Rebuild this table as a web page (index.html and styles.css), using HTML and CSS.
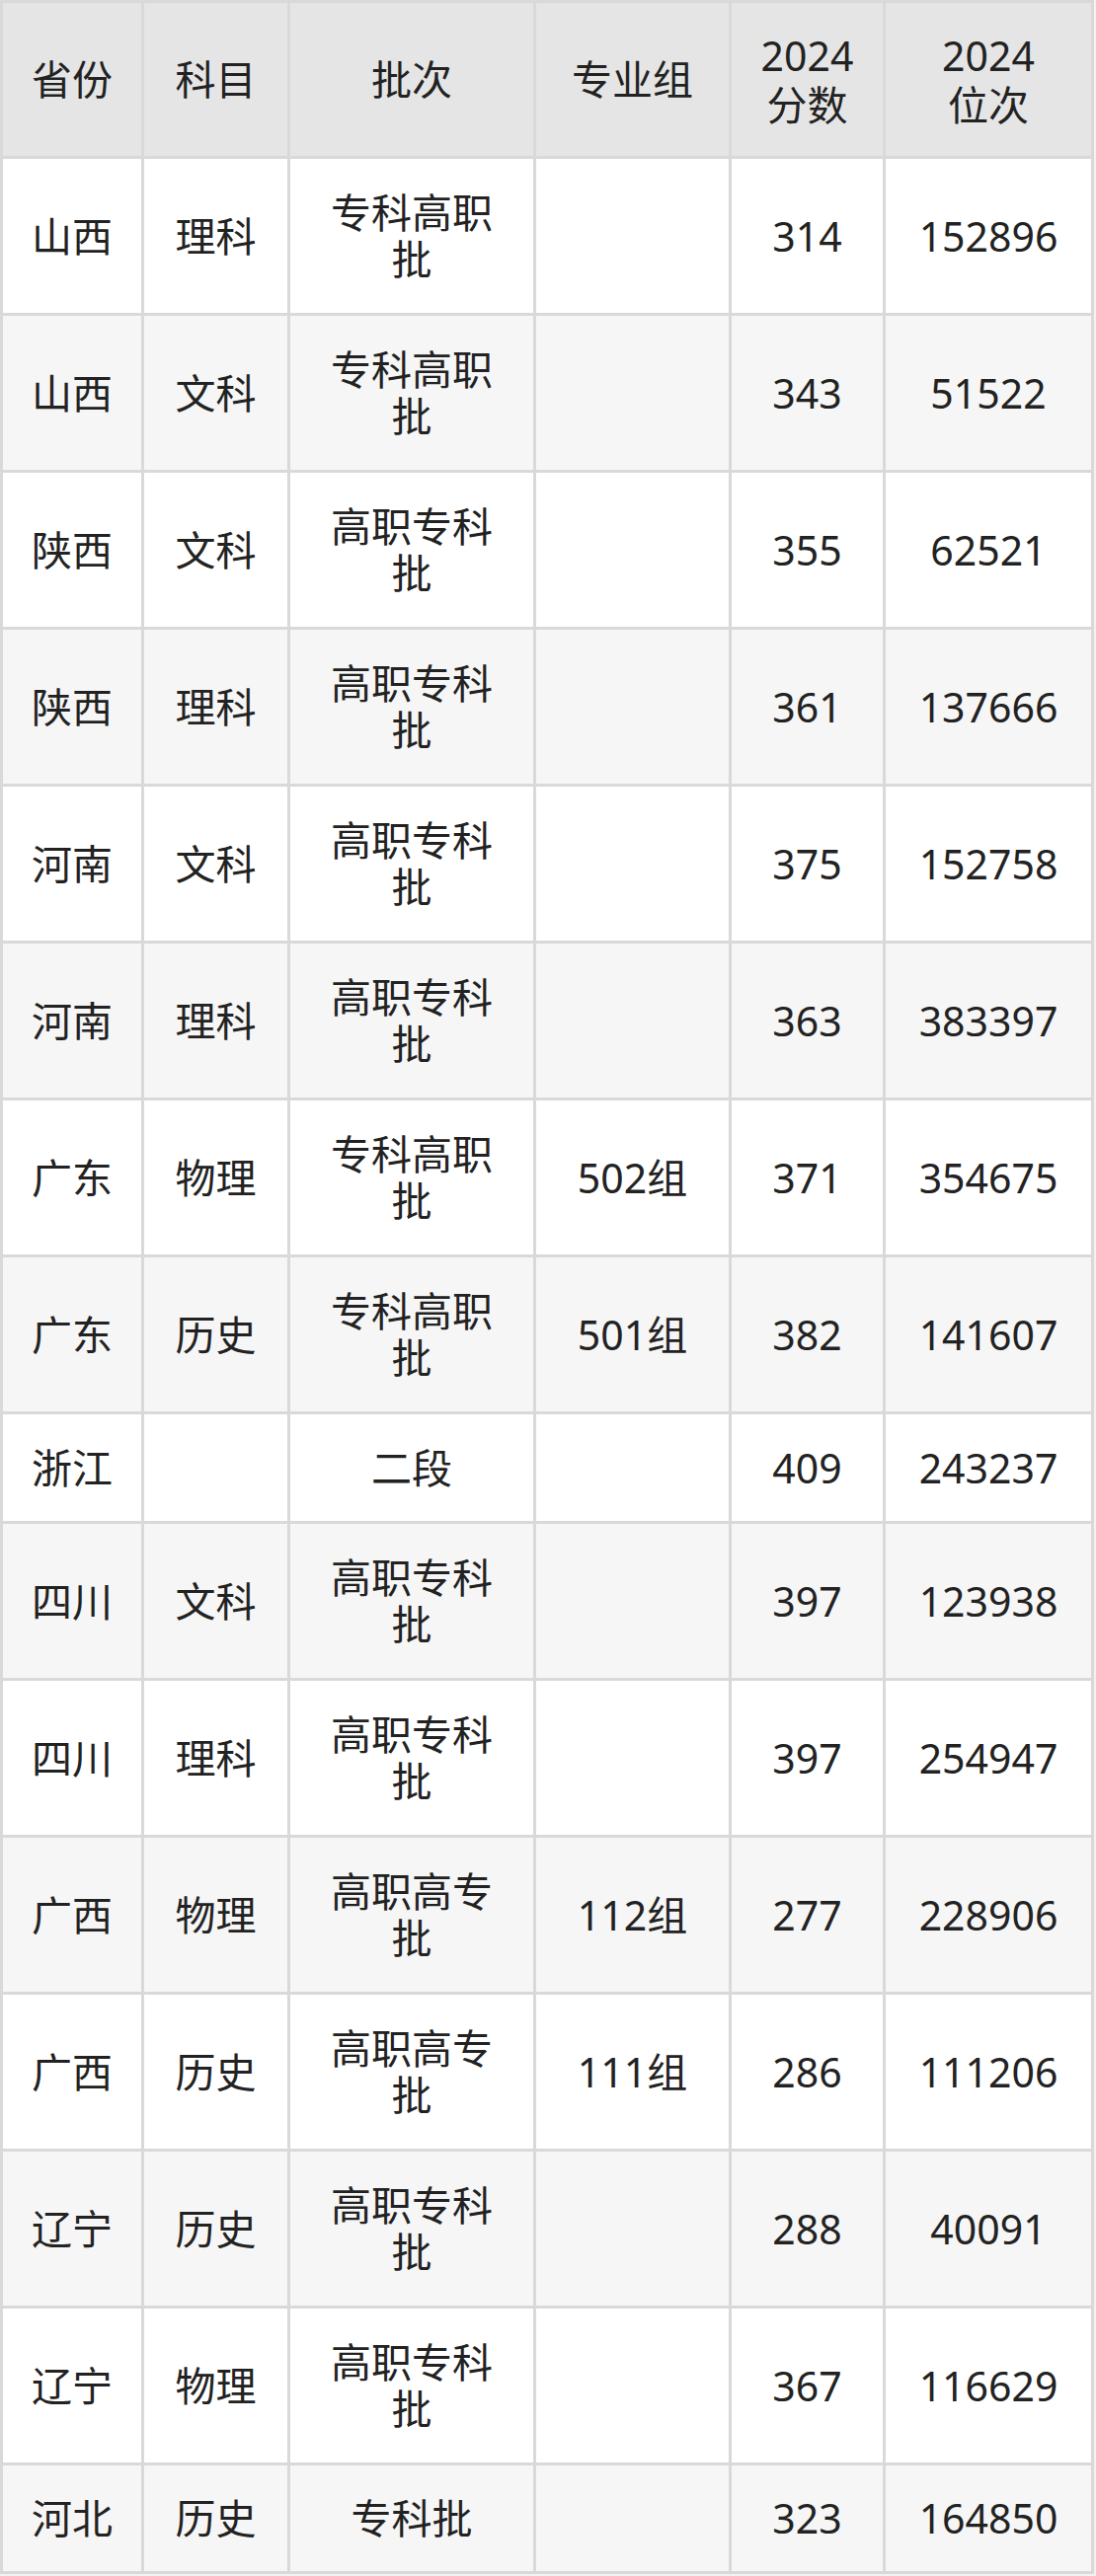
FILE: index.html
```html
<!DOCTYPE html>
<html lang="zh-CN">
<head>
<meta charset="utf-8">
<title>2024 分数位次</title>
<link rel="stylesheet" href="styles.css">
</head>
<body>
<table class="score-table">
  <colgroup>
    <col class="c-prov">
    <col class="c-subj">
    <col class="c-batch">
    <col class="c-group">
    <col class="c-score">
    <col class="c-rank">
  </colgroup>
  <thead>
    <tr class="head-row">
      <th>省份</th>
      <th>科目</th>
      <th>批次</th>
      <th>专业组</th>
      <th><span class="line">2024</span><span class="line">分数</span></th>
      <th><span class="line">2024</span><span class="line">位次</span></th>
    </tr>
  </thead>
  <tbody>
    <tr class="row-tall"><td>山西</td><td>理科</td><td class="batch">专科高职批</td><td></td><td>314</td><td>152896</td></tr>
    <tr class="row-tall"><td>山西</td><td>文科</td><td class="batch">专科高职批</td><td></td><td>343</td><td>51522</td></tr>
    <tr class="row-tall"><td>陕西</td><td>文科</td><td class="batch">高职专科批</td><td></td><td>355</td><td>62521</td></tr>
    <tr class="row-tall"><td>陕西</td><td>理科</td><td class="batch">高职专科批</td><td></td><td>361</td><td>137666</td></tr>
    <tr class="row-tall"><td>河南</td><td>文科</td><td class="batch">高职专科批</td><td></td><td>375</td><td>152758</td></tr>
    <tr class="row-tall"><td>河南</td><td>理科</td><td class="batch">高职专科批</td><td></td><td>363</td><td>383397</td></tr>
    <tr class="row-tall"><td>广东</td><td>物理</td><td class="batch">专科高职批</td><td>502组</td><td>371</td><td>354675</td></tr>
    <tr class="row-tall"><td>广东</td><td>历史</td><td class="batch">专科高职批</td><td>501组</td><td>382</td><td>141607</td></tr>
    <tr class="row-short"><td>浙江</td><td></td><td class="batch">二段</td><td></td><td>409</td><td>243237</td></tr>
    <tr class="row-tall"><td>四川</td><td>文科</td><td class="batch">高职专科批</td><td></td><td>397</td><td>123938</td></tr>
    <tr class="row-tall"><td>四川</td><td>理科</td><td class="batch">高职专科批</td><td></td><td>397</td><td>254947</td></tr>
    <tr class="row-tall"><td>广西</td><td>物理</td><td class="batch">高职高专批</td><td>112组</td><td>277</td><td>228906</td></tr>
    <tr class="row-tall"><td>广西</td><td>历史</td><td class="batch">高职高专批</td><td>111组</td><td>286</td><td>111206</td></tr>
    <tr class="row-tall"><td>辽宁</td><td>历史</td><td class="batch">高职专科批</td><td></td><td>288</td><td>40091</td></tr>
    <tr class="row-tall"><td>辽宁</td><td>物理</td><td class="batch">高职专科批</td><td></td><td>367</td><td>116629</td></tr>
    <tr class="row-short row-last"><td>河北</td><td>历史</td><td class="batch">专科批</td><td></td><td>323</td><td>164850</td></tr>
  </tbody>
</table>
</body>
</html>
```

FILE: styles.css
```css
html, body {
  margin: 0;
  padding: 0;
  background: #f2f2f2;
}

.score-table {
  width: 1108px;
  table-layout: fixed;
  border-collapse: collapse;
  font-family: "Noto Sans", "Noto Sans CJK SC", sans-serif;
  font-size: 41px;
  line-height: 47px;
  color: #222222;
  background: #ffffff;
}

.c-prov { width: 143px; }
.c-subj { width: 148px; }
.c-batch { width: 249px; }
.c-group { width: 198px; }
.c-score { width: 156px; }
.c-rank { width: 211px; }

.score-table th,
.score-table td {
  border: 3px solid #d9d9d9;
  padding: 0 6px;
  text-align: center;
  vertical-align: middle;
  font-weight: 400;
  white-space: nowrap;
}

.score-table td.batch {
  padding: 0 36px;
  white-space: normal;
  word-break: break-all;
}

.head-row th {
  background: #e5e5e5;
  height: 155px;
}

.head-row .line {
  display: block;
  line-height: 50px;
}

.row-tall td {
  height: 156px;
}

.row-short td {
  height: 108px;
}

.row-last td {
  height: 107px;
}

.score-table tbody tr:nth-child(even) td {
  background: #f6f6f6;
}

.score-table tbody tr:nth-child(odd) td {
  background: #ffffff;
}
```
